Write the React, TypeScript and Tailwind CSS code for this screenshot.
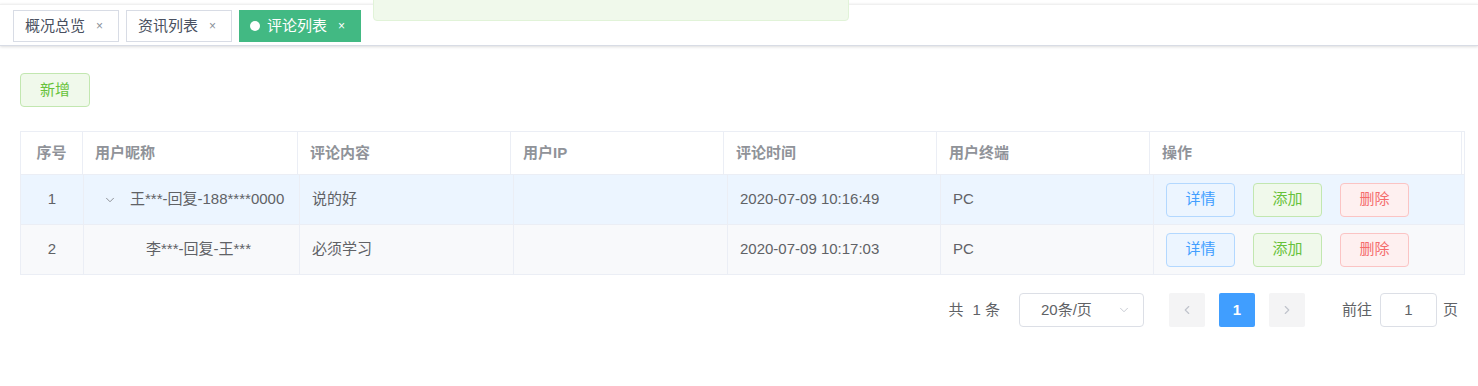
import { ChevronDown, ChevronLeft, ChevronRight } from 'lucide-react'

const font = { fontFamily: '"Liberation Sans", "Noto Sans CJK SC", sans-serif' }

const tabs = [
  { label: '概况总览', active: false },
  { label: '资讯列表', active: false },
  { label: '评论列表', active: true },
]

const rows = [
  { no: 1, name: '王***-回复-188****0000', content: '说的好', time: '2020-07-09 10:16:49', device: 'PC', child: false },
  { no: 2, name: '李***-回复-王***', content: '必须学习', time: '2020-07-09 10:17:03', device: 'PC', child: true },
]

const headCols = 'grid grid-cols-[62px_215px_213px_213px_213px_213px_312px_3px]'
const bodyCols = 'grid grid-cols-[63px_216px_214px_214px_213px_213px_311px]'

export default function App() {
  return (
    <div className="relative min-h-screen bg-white text-[15px] text-[#606266]" style={font}>
      {/* toast */}
      <div className="absolute left-[373px] top-[-10px] w-[476px] h-[27px] rounded-[4px] border border-[#e1f3d8] bg-[#f0f9eb]" />

      {/* tags view */}
      <div className="mt-[4px] h-[42px] border-t border-[#f0f0f0] border-b border-b-[#d8dce5] shadow-[0_1px_3px_0_rgba(0,0,0,0.12),0_0_3px_0_rgba(0,0,0,0.04)] flex items-start gap-[7px] pl-[13px] pt-[5px]">
        {tabs.map((t) =>
          t.active ? (
            <div
              key={t.label}
              className="h-[32px] flex items-center bg-[#42b983] border border-[#42b983] text-white pl-[10px] pr-[15px]"
            >
              <span className="w-[10px] h-[10px] rounded-full bg-white mr-[7px]" />
              <span>{t.label}</span>
              <span className="ml-[11px] text-[12px] leading-none">×</span>
            </div>
          ) : (
            <div
              key={t.label}
              className="h-[32px] flex items-center border border-[#d8dce5] text-[#495060] pl-[11px] pr-[15px]"
            >
              <span>{t.label}</span>
              <span className="ml-[11px] text-[12px] leading-none text-[#8a8f99]">×</span>
            </div>
          )
        )}
      </div>

      {/* main */}
      <div className="pl-[20px] pr-[14px] pt-[27px]">
        <button className="w-[70px] h-[34px] rounded-[4px] border border-[#c2e7b0] bg-[#f0f9eb] text-[#67c23a]">
          新增
        </button>

        <div className="mt-[24px] w-[1445px] border border-[#ebeef5]">
          <div className={`${headCols} h-[42px] text-[#909399] font-bold`}>
            <div className="flex items-center justify-center border-r border-[#ebeef5]">序号</div>
            {['用户昵称', '评论内容', '用户IP', '评论时间', '用户终端', '操作'].map((h) => (
              <div key={h} className="flex items-center px-[12px] border-r border-[#ebeef5]">
                {h}
              </div>
            ))}
            <div />
          </div>
          {rows.map((r, i) => (
            <div
              key={r.no}
              className={`${bodyCols} h-[50px] border-t border-[#ebeef5] ${i === 0 ? 'bg-[#ecf5ff]' : 'bg-[#f8f9fb]'}`}
            >
              <div className="flex items-center justify-center border-r border-[#ebeef5]">{r.no}</div>
              <div className="flex items-center pl-[12px] border-r border-[#ebeef5]">
                {r.child ? (
                  <span className="pl-[50px]">{r.name}</span>
                ) : (
                  <>
                    <span className="w-[34px] flex items-center pl-[7px]">
                      <ChevronDown size={14} strokeWidth={1.5} className="text-[#808288]" />
                    </span>
                    <span>{r.name}</span>
                  </>
                )}
              </div>
              <div className="flex items-center px-[12px] border-r border-[#ebeef5]">{r.content}</div>
              <div className="flex items-center px-[12px] border-r border-[#ebeef5]" />
              <div className="flex items-center px-[12px] border-r border-[#ebeef5]">{r.time}</div>
              <div className="flex items-center px-[12px] border-r border-[#ebeef5]">{r.device}</div>
              <div className="flex items-center gap-[18px] px-[12px]">
                <button className="w-[69px] h-[34px] rounded-[4px] border border-[#b3d8ff] bg-[#ecf5ff] text-[#409eff]">详情</button>
                <button className="w-[69px] h-[34px] rounded-[4px] border border-[#c2e7b0] bg-[#f0f9eb] text-[#67c23a]">添加</button>
                <button className="w-[69px] h-[34px] rounded-[4px] border border-[#fbc4c4] bg-[#fef0f0] text-[#f56c6c]">删除</button>
              </div>
            </div>
          ))}
        </div>

        {/* pagination */}
        <div className="mt-[18px] flex items-center justify-end pr-[6px] h-[34px]">
          <span className="mr-[19px] flex items-center">
            <span>共</span>
            <span className="ml-[9px]">1</span>
            <span className="ml-[4px]">条</span>
          </span>
          <div className="w-[125px] h-[34px] rounded-[4px] border border-[#dcdfe6] flex items-center pl-[21px] pr-[12px] text-[#606266]">
            <span className="flex-1">20条/页</span>
            <ChevronDown size={14} strokeWidth={1.5} className="text-[#c0c4cc]" />
          </div>
          <button className="ml-[25px] w-[36px] h-[34px] rounded-[2px] bg-[#f4f4f5] flex items-center justify-center text-[#c0c4cc]">
            <ChevronLeft size={14} strokeWidth={2} />
          </button>
          <button className="ml-[14px] w-[36px] h-[34px] rounded-[2px] bg-[#409eff] text-white font-bold">1</button>
          <button className="ml-[14px] w-[36px] h-[34px] rounded-[2px] bg-[#f4f4f5] flex items-center justify-center text-[#c0c4cc]">
            <ChevronRight size={14} strokeWidth={2} />
          </button>
          <span className="ml-[37px]">前往</span>
          <div className="ml-[8px] w-[57px] h-[34px] rounded-[4px] border border-[#dcdfe6] flex items-center justify-center text-[#606266]">
            1
          </div>
          <span className="ml-[6px]">页</span>
        </div>
      </div>
    </div>
  )
}
